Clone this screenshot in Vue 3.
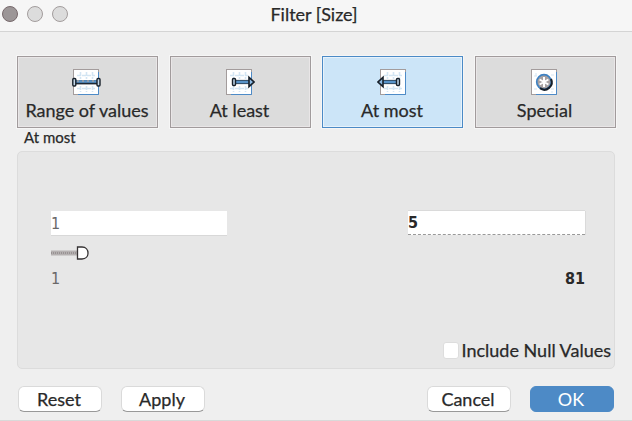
<script setup>
import { ref } from 'vue'

const modes = [
  { id: 'range', label: 'Range of values' },
  { id: 'least', label: 'At least' },
  { id: 'most', label: 'At most' },
  { id: 'special', label: 'Special' },
]
const selected = ref('most')
const low = ref('1')
const high = ref('5')
const includeNull = ref(false)
</script>

<template>
  <div class="window">
    <header class="titlebar">
      <div class="lights">
        <i class="light close"></i><i class="light"></i><i class="light"></i>
      </div>
      <h1 class="title">Filter [Size]</h1>
    </header>

    <nav class="modes">
      <button
        v-for="m in modes"
        :key="m.id"
        class="mode"
        :class="[m.id, { active: m.id === selected }]"
        @click="selected = m.id"
      >
        <svg class="icon" width="32" height="28" viewBox="0 0 32 28">
          <rect x="3.5" y="1.5" width="25" height="25" fill="#fff" stroke="#a39c9c" />
          <path d="M28.5 4V26.5H8" fill="none" stroke="#4d8bc8" />
          <path
            v-if="m.id !== 'special'"
            d="M7 7.5H25M7 20.5H25M10.5 4V11M16.5 4V11M22.5 4V11M10.5 18V24M16.5 18V24M22.5 18V24"
            stroke="#d3e5f3"
            stroke-width="1.6"
            stroke-dasharray="4 1"
          />
          <path v-else d="M6 8H9M8 5V8M23 7H26M6 21H9M23 21H26M24 23V25" stroke="#d3e5f3" />
          <g v-if="m.id === 'range'">
            <path d="M4 14.3H28" stroke="#1d2732" stroke-width="4.2" />
            <path d="M4 13.5H28" stroke="#5793c9" stroke-width="2.6" />
            <path d="M7 13H25" stroke="#c9aa96" stroke-width="1" stroke-dasharray="2 3" />
            <rect x="2.8" y="10.5" width="3" height="7.5" rx="1" fill="#c5d8e9" stroke="#17202a" stroke-width="1.4" />
            <rect x="27" y="10.5" width="3" height="7.5" rx="1" fill="#c5d8e9" stroke="#17202a" stroke-width="1.4" />
          </g>
          <g v-else-if="m.id === 'least' || m.id === 'most'" :class="{ flip: m.id === 'most' }">
            <path d="M11 14H26" stroke="#1d2732" stroke-width="4.2" />
            <path d="M11 14H27" stroke="#5793c9" stroke-width="2.8" />
            <rect x="9.5" y="10.5" width="3" height="7" rx="1" fill="#b7cee2" stroke="#17202a" stroke-width="1.4" />
            <path d="M26 9.3V18.7L31 14Z" fill="#8dbbe5" stroke="#17202a" stroke-width="1.6" />
          </g>
          <g v-else>
            <circle cx="16" cy="14" r="7.3" fill="#a7a1a2" stroke="#3f82c2" stroke-width="1.7" />
            <path d="M23 11A7.4 7.4 0 0 1 12 20.2" fill="none" stroke="#17202a" stroke-width="2.1" />
            <path d="M16 9V19M11.6 11.5L20.4 16.5M20.4 11.5L11.6 16.5" stroke="#fff" stroke-width="2" />
          </g>
        </svg>
        <span class="text">{{ m.label }}</span>
      </button>
    </nav>

    <div class="caption"><span class="text">At most</span></div>

    <section class="panel">
      <div class="bounds">
        <div class="bound low">
          <input v-model="low" class="field" />
          <svg class="slider" width="40" height="16" viewBox="0 0 40 16">
            <path d="M0 8H27" stroke="#b5b1b1" stroke-width="5" />
            <path d="M0 8H27" stroke="#999394" stroke-width="2" stroke-dasharray="1 1" />
            <path d="M26.5 2H31C39 2 39 14 31 14H26.5Z" fill="#fff" stroke="#353233" stroke-width="1.3" />
          </svg>
          <span class="limit">1</span>
        </div>
        <div class="bound high">
          <input v-model="high" class="field" />
          <span class="limit">81</span>
        </div>
      </div>
      <label class="nulls">
        <input v-model="includeNull" type="checkbox" class="check" />
        <span class="text">Include Null Values</span>
      </label>
    </section>

    <footer class="actions">
      <button class="btn reset"><span class="text">Reset</span></button>
      <button class="btn apply"><span class="text">Apply</span></button>
      <button class="btn cancel"><span class="text">Cancel</span></button>
      <button class="btn ok"><span class="text">OK</span></button>
    </footer>
  </div>
</template>

<style>
body { margin: 0; background: #efefef; }
</style>

<style scoped>
* { box-sizing: border-box; }
.window {
  width: 632px; height: 421px; overflow: hidden;
  display: flex; flex-direction: column;
  background: #efefef; border-bottom: 1px solid #d9d9d9;
  color: #292929; font: 18px/22px Lato, "Noto Sans", sans-serif;
}
button, input { font: inherit; color: inherit; margin: 0; padding: 0; }
.text { white-space: nowrap; -webkit-text-stroke: .25px currentColor; }
.titlebar {
  flex: none; height: 32px; background: #f6f6f6; border-bottom: 1px solid #d4d4d4;
  display: grid; grid-template-columns: 100px 1fr 104px;
}
.lights { display: flex; gap: 9px; padding: 6px 0 0 2px; }
.light { width: 16px; height: 16px; border-radius: 50%; background: #dcdcdc; border: 1px solid #a39d9d; }
.close { background: #9c9697; border-color: #77696c; }
.title { margin: 0; padding-top: 3px; text-align: center; font-size: 18px; font-weight: 400; line-height: 22px; -webkit-text-stroke: .25px currentColor; }
.modes { flex: none; display: grid; grid-template-columns: repeat(4, 141px); gap: 11.5px; padding: 24px 0 0 17px; }
.mode {
  height: 72px; display: flex; flex-direction: column; align-items: center;
  background: #dcdcdc; border: 1.5px solid #a19b9c; padding-top: 11px; outline: 1px solid #f6f6f6;
  box-shadow: inset 0 0 0 1px #e9e6e7;
}
.mode.active { background: #cce5f8; border: 1.5px solid #4b8ac6; box-shadow: inset 0 0 0 1px #e7f2fb; }
.icon { display: block; flex: none; margin-right: 3px; }
.most .icon { margin-right: 0; }
.flip { transform: translateX(32px) scaleX(-1); }
.mode .text { margin: 3px 1px 0 0; }
.caption { flex: none; height: 23px; padding-left: 24px; font-size: 15px; line-height: 19px; }
.panel {
  flex: none; width: 598px; height: 218px; margin-left: 17px; padding: 59px 3px 0 33px;
  background: #e7e7e7; border: 1px solid #dcdcdc; border-radius: 5px;
}
.bounds { display: flex; justify-content: space-between; height: 128px; padding-right: 26px; }
.bound { display: flex; flex-direction: column; width: 176px; font-family: "DejaVu Sans Condensed", "DejaVu Sans", sans-serif; font-stretch: condensed; font-size: 16px; }
.high { width: 177px; font-weight: 700; }
.field { display: block; width: 100%; height: 24px; border: 0; border-radius: 0; background: #fff; outline: 0; box-shadow: 0 1px 0 #d8d8d8; }
.high .field { border-bottom: 1px dashed #999; box-shadow: 0 -1px 0 #dadada, 1px 0 0 #dadada; }
.low { color: #6a6868; }
.slider { display: block; margin-top: 10px; }
.low .limit { margin-top: 7px; }
.high .limit { align-self: flex-end; margin-top: 33px; }
.nulls { display: flex; justify-content: flex-end; align-items: center; gap: 3px; }
.check { appearance: none; width: 16px; height: 17px; border-radius: 3px; background: #fff; border: 1px solid #ddd; }
.actions { flex: none; display: flex; gap: 19px; padding: 17px 18px 0 18px; }
.btn {
  width: 84px; height: 26px; border: 1px solid #dadada; border-bottom-color: #999;
  border-radius: 6px; background: #fff; line-height: 22px;
}
.btn .text { margin-right: 2px; }
.cancel { margin-left: auto; }
.ok { background: #4d8ac6; border-color: #4d8ac6; color: #fff; }
.ok .text { -webkit-text-stroke: 0; }
</style>
